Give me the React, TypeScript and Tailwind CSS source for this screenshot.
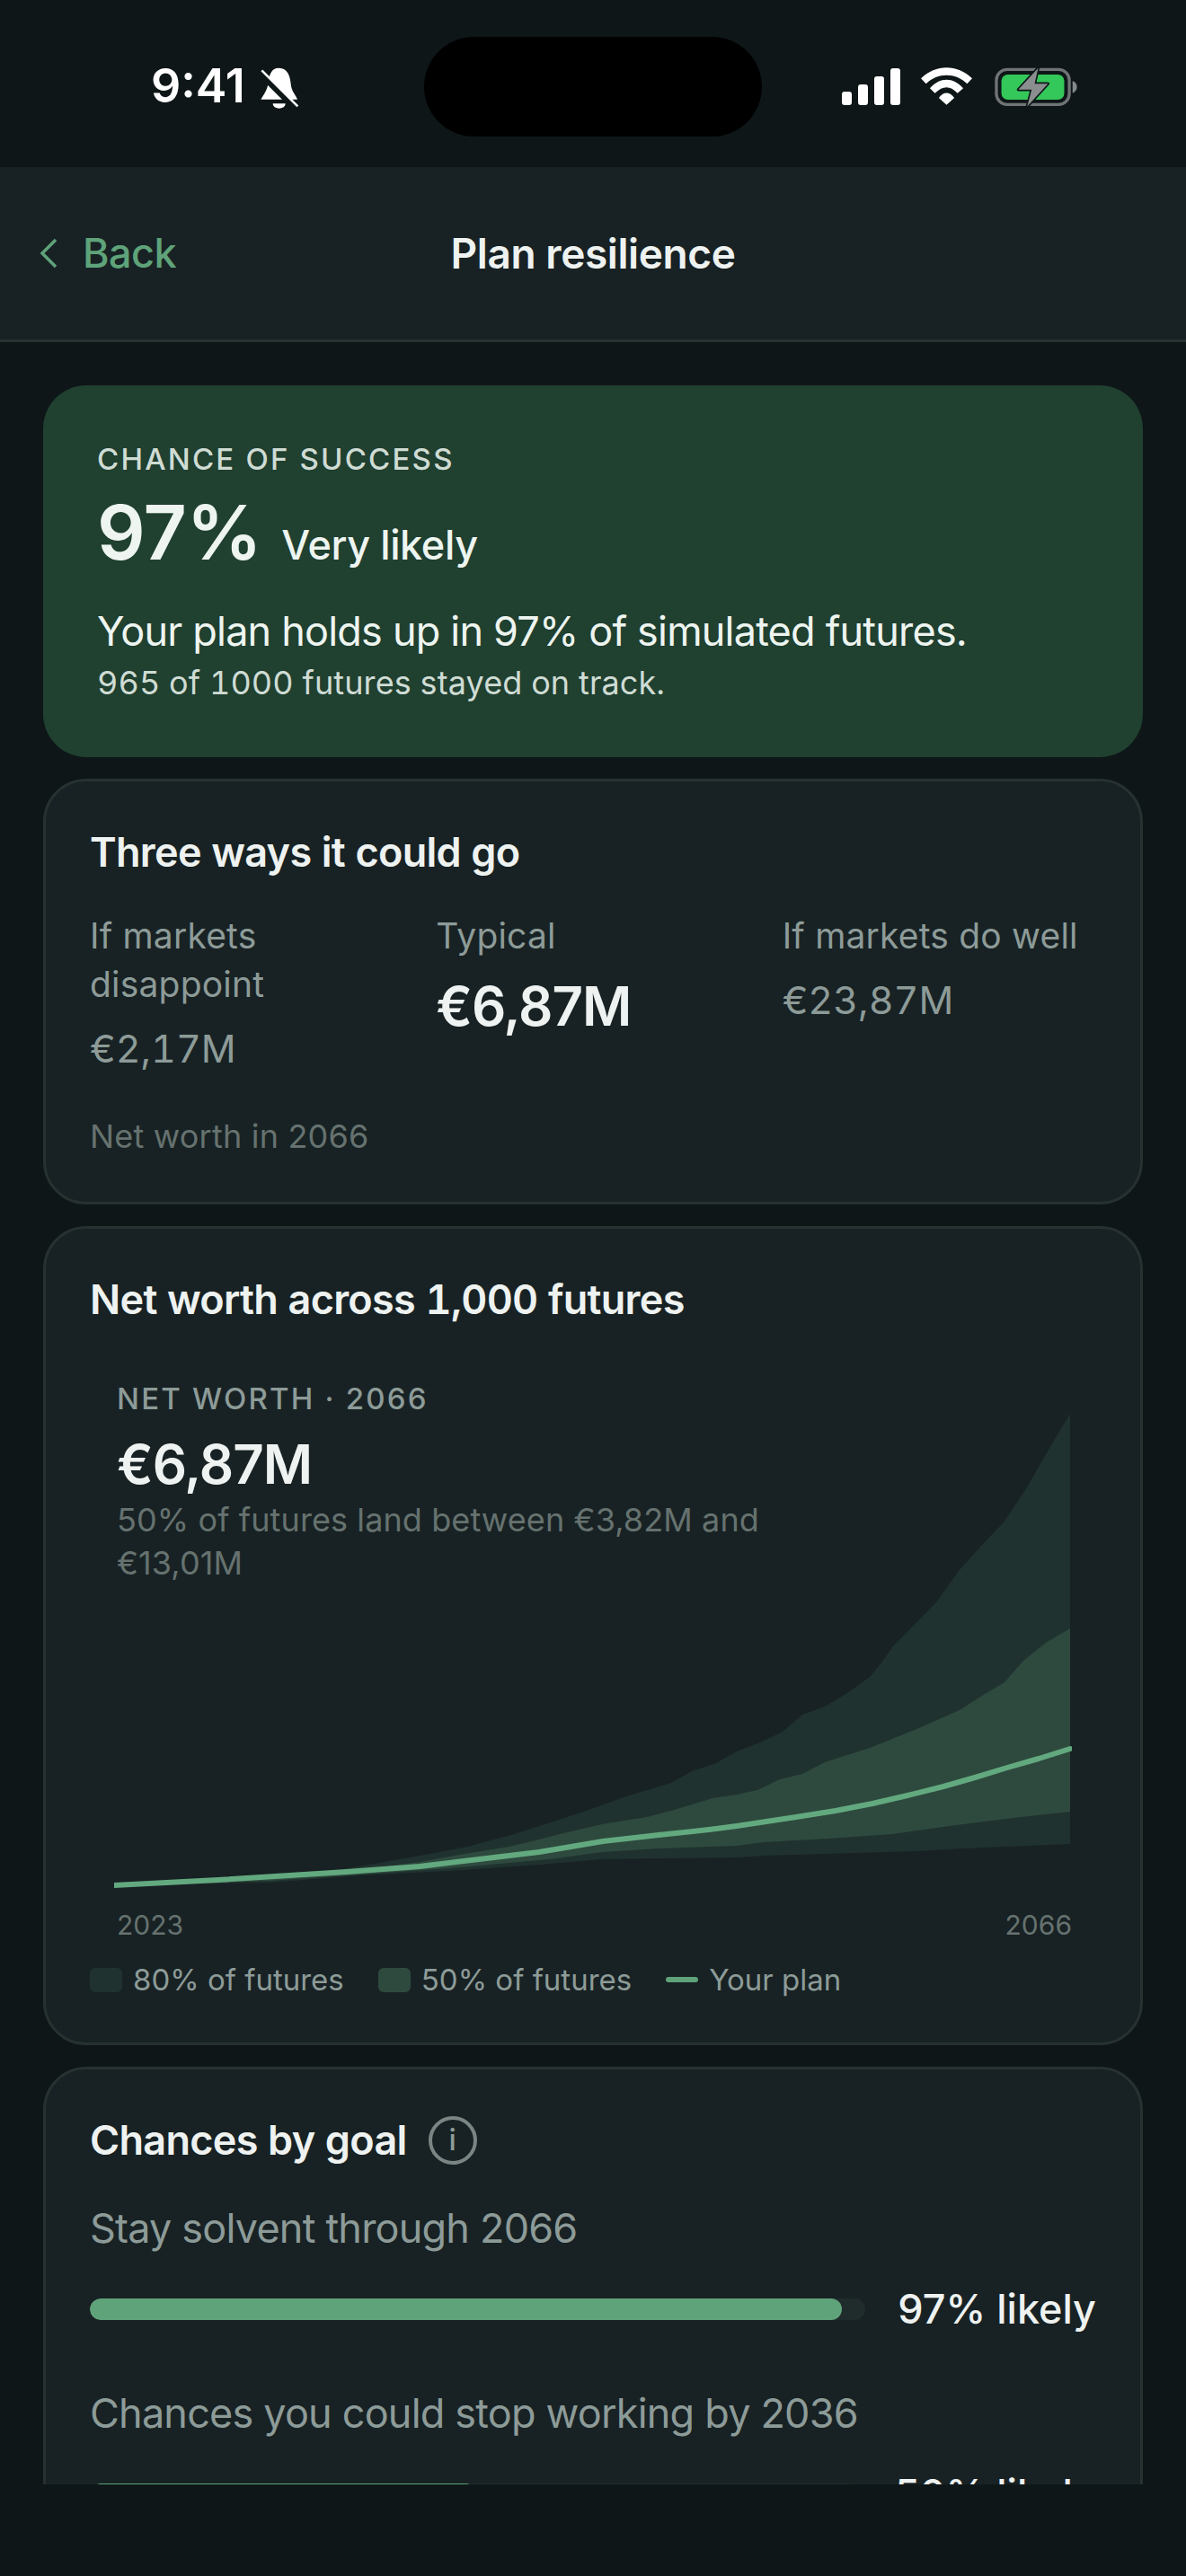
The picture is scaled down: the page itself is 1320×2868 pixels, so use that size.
const p90 = "127,2098 300,2089 350,2085 400,2077 473,2064 520,2055 573,2041 600,2032 647,2017 697,1999 747,1984 770,1971 797,1962 820,1949 846,1939 871,1927 893,1908 918,1899 943,1884 968,1866 982,1849 993,1833 1042,1783 1067,1748 1092,1720 1117,1694 1143,1655 1167,1613 1191,1573";
const p10 = "1191,2052 1071,2057 1021,2060 850,2065 820,2067 733,2068 670,2069 600,2075 500,2082 400,2087 300,2095 127,2098";
const p75 = "127,2098 300,2091 400,2081 467,2072 517,2063 567,2055 600,2047 623,2041 670,2030 720,2022 747,2015 793,2001 820,1997 843,1992 868,1980 893,1974 918,1961 943,1953 968,1945 993,1935 1018,1925 1043,1914 1068,1903 1093,1887 1118,1872 1139,1848 1164,1828 1191,1812";
const p25 = "1191,2016 1136,2022 1064,2031 993,2041 921,2046 850,2050 820,2054 733,2057 670,2061 620,2068 567,2073 500,2079 400,2086 300,2093 127,2098";
const median = "127,2098 243,2092 386,2083 467,2077 533,2069 600,2061 671,2049 733,2042 789,2036 820,2032 886,2022 930,2015 971,2007 1010,1998 1050,1988 1085,1978 1121,1967 1156,1957 1191,1946";

function BellSlash() {
  return (
    <svg width="44" height="48" viewBox="446 72 132 144" aria-hidden>
      <path d="M510 77C540 77 548 105 550 130C552 155 565 165 572 182L450 182C460 165 472 150 475 125C478 100 485 77 510 77Z" fill="#fff" />
      <path d="M490 196H532C532 206 522 212 511 212C500 212 490 206 490 196Z" fill="#fff" />
      <path d="M446 92L566 212" stroke="#0e1618" strokeWidth="22" />
      <path d="M453 85L573 205" stroke="#fff" strokeWidth="8" />
    </svg>
  );
}

function SignalIcon() {
  return (
    <svg width="65" height="41" viewBox="0 0 65 41" fill="#fff" aria-hidden>
      <rect x="0" y="26" width="11" height="15" rx="3" />
      <rect x="18" y="18" width="11" height="23" rx="3" />
      <rect x="36" y="9" width="11" height="32" rx="3" />
      <rect x="54" y="0" width="11" height="41" rx="3" />
    </svg>
  );
}

function WifiIcon() {
  return (
    <svg width="57" height="42" viewBox="375 76 172 125" fill="#fff" aria-hidden>
      <path d="M375 112C425 64 497 64 547 112L530 130C490 92 432 92 392 130Z" />
      <path d="M405 145C440 107 482 107 517 145L498 162C472 136 450 136 422 162Z" />
      <path d="M435 178C452 156 470 156 487 178L461 201Z" />
    </svg>
  );
}

function BatteryIcon() {
  return (
    <svg width="93" height="45" viewBox="612 70 282 136" aria-hidden>
      <rect x="621" y="80" width="246" height="118" rx="36" fill="none" stroke="#707475" strokeWidth="10" />
      <rect x="638" y="97" width="212" height="85" rx="22" fill="#34c759" />
      <path d="M878 118C888 122 893 130 893 139C893 148 888 156 878 160Z" fill="#85898a" />
      <path d="M762 75L695 148H740L725 205L795 128H750Z" fill="#8a8e8f" stroke="#0e1618" strokeWidth="10" strokeLinejoin="round" paintOrder="stroke" />
    </svg>
  );
}

function StatusBar() {
  return (
    <div className="grid h-[186px] shrink-0 grid-cols-[472px_376px_1fr] items-center pt-[6px]">
      <div className="flex items-center pl-[168px] text-[52px] font-semibold leading-none text-white">
        <span>9:41</span>
        <span className="ml-[16px] mt-[4px]">
          <BellSlash />
        </span>
      </div>
      <div className="h-[111px] rounded-full bg-black" />
      <div className="flex items-center pl-[89px]">
        <SignalIcon />
        <span className="ml-[23px]">
          <WifiIcon />
        </span>
        <span className="ml-[24px]">
          <BatteryIcon />
        </span>
      </div>
    </div>
  );
}

function NavBar() {
  return (
    <div className="relative flex h-[195px] shrink-0 items-center justify-center border-b-[3px] border-[#263130] bg-[#182224]">
      <button className="absolute left-[44px] flex items-center text-[45px] font-medium tracking-[-0.5px] text-[#5fa37a]">
        <svg width="20" height="34" viewBox="0 0 20 34" fill="none" stroke="#5fa37a" strokeWidth="3.5" aria-hidden>
          <path d="M18 2L3 17L18 32" />
        </svg>
        <span className="ml-[28px]">Back</span>
      </button>
      <h1 className="text-[46px] font-semibold tracking-[-0.4px] text-[#eef2f0]">Plan resilience</h1>
    </div>
  );
}

function Card({ children }: { children: React.ReactNode }) {
  return <section className="rounded-[48px] border-[3px] border-[#263130] bg-[#182224] p-[49px]">{children}</section>;
}

function CardTitle({ children }: { children: React.ReactNode }) {
  return <h2 className="text-[45px] font-semibold leading-[60px] tracking-[-0.7px] tabular-nums text-[#eef2f0]">{children}</h2>;
}

function Scenario({ label, value, strong }: { label: string; value: string; strong?: boolean }) {
  return (
    <div>
      <p className="text-[39px] leading-[54px] tracking-[0.2px] text-[#8d9b98]">{label}</p>
      {strong ? (
        <p className="mt-[15px] text-[60px] font-semibold leading-[72px] tracking-[-1px] text-[#eef2f0]">{value}</p>
      ) : (
        <p className="mt-[14px] text-[43px] leading-[60px] tabular-nums text-[#8d9b98]">{value}</p>
      )}
    </div>
  );
}

function LegendSwatch({ color, label }: { color: string; label: string }) {
  return (
    <div className="flex items-center gap-[12px]">
      <span className={color} />
      <span>{label}</span>
    </div>
  );
}

function Goal({ label, result, percent }: { label: string; result: string; percent: number }) {
  return (
    <div>
      <p className="text-[45px] leading-[60px] tracking-[-0.8px] text-[#8d9b98]">{label}</p>
      <div className="mt-[30px] flex items-center gap-[36px]">
        <div className="h-[24px] flex-1 overflow-hidden rounded-full bg-[#202b2b]">
          <div className="h-full rounded-full bg-[#5fa37a]" style={{ width: `${percent}%` }} />
        </div>
        <span className="text-[45px] font-medium leading-[60px] text-[#eef2f0]">{result}</span>
      </div>
    </div>
  );
}

export default function App() {
  return (
    <div className="flex h-[2868px] w-[1320px] flex-col overflow-hidden bg-[#0e1618] font-['Inter',sans-serif]">
      <StatusBar />
      <NavBar />
      <main className="h-[2385px] shrink-0 overflow-hidden px-[48px] pt-[48px]">
        <div className="flex flex-col gap-[24px]">
          <section className="rounded-[48px] bg-[#204030] px-[60px] pb-[58px] pt-[60px] text-[#eef5f0]">
            <p className="text-[33px] font-medium leading-[44px] tracking-[2.2px] text-[#cfdcd4]">CHANCE OF SUCCESS</p>
            <div className="mt-[10px] flex items-baseline gap-[22px]">
              <span className="text-[84px] font-semibold leading-[100px] tracking-[-0.5px]">97%</span>
              <span className="text-[45px] font-medium tracking-[-0.4px]">Very likely</span>
            </div>
            <p className="mt-[30px] text-[45px] leading-[60px] tracking-[-0.8px]">Your plan holds up in 97% of simulated futures.</p>
            <p className="mt-[2px] text-[36px] leading-[50px] tracking-[0.1px] tabular-nums text-[#cfdcd4]">965 of 1000 futures stayed on track.</p>
          </section>

          <Card>
            <CardTitle>Three ways it could go</CardTitle>
            <div className="mt-[36px] grid grid-cols-3 gap-[36px]">
              <Scenario label="If markets disappoint" value="€2,17M" />
              <Scenario label="Typical" value="€6,87M" strong />
              <Scenario label="If markets do well" value="€23,87M" />
            </div>
            <p className="mt-[44px] text-[36px] leading-[48px] tracking-[0.2px] text-[#66726f]">Net worth in 2066</p>
          </Card>

          <Card>
            <CardTitle>Net worth across 1,000 futures</CardTitle>
            <div className="relative mt-[54px] px-[27px]">
              <svg className="block" width="1066" height="580" viewBox="127 1530 1066 580" aria-hidden>
                <polygon points={`${p90} ${p10}`} fill="#20322f" />
                <polygon points={`${p75} ${p25}`} fill="#2e4a3e" />
                <polyline points={median} fill="none" stroke="#63a97f" strokeWidth="6" strokeLinecap="round" strokeLinejoin="round" />
              </svg>
              <div className="absolute left-[30px] top-[5px] w-[760px]">
                <p className="text-[33px] font-medium leading-[42px] tracking-[2.2px] text-[#8d9b98]">NET WORTH · 2066</p>
                <p className="mt-[16px] text-[60px] font-semibold leading-[72px] tracking-[-1px] text-[#eef2f0]">€6,87M</p>
                <p className="mt-[2px] text-[36px] leading-[48px] tracking-[0.1px] text-[#66726f]">50% of futures land between €3,82M and €13,01M</p>
              </div>
              <div className="mt-[12px] flex justify-between pl-[3px] text-[30px] leading-[40px] text-[#66726f]">
                <span>2023</span>
                <span>2066</span>
              </div>
            </div>
            <div className="mb-[-1px] mt-[19px] flex items-center gap-[38px] text-[33px] leading-[44px] text-[#8d9b98]">
              <LegendSwatch color="h-[27px] w-[36px] rounded-[6px] bg-[#20322f]" label="80% of futures" />
              <LegendSwatch color="h-[27px] w-[36px] rounded-[6px] bg-[#2e4a3e]" label="50% of futures" />
              <LegendSwatch color="h-[6px] w-[36px] rounded-full bg-[#5fa37a]" label="Your plan" />
            </div>
          </Card>

          <Card>
            <div className="flex items-center gap-[24px]">
              <CardTitle>Chances by goal</CardTitle>
              <span className="flex h-[54px] w-[54px] items-center justify-center rounded-full border-[4px] border-[#7a8684] text-[33px] font-medium text-[#8d9b98]">i</span>
            </div>
            <div className="mt-[38px] flex flex-col gap-[56px]">
              <Goal label="Stay solvent through 2066" result="97% likely" percent={97} />
              <Goal label="Chances you could stop working by 2036" result="50% likely" percent={50} />
            </div>
          </Card>
        </div>
      </main>
    </div>
  );
}
